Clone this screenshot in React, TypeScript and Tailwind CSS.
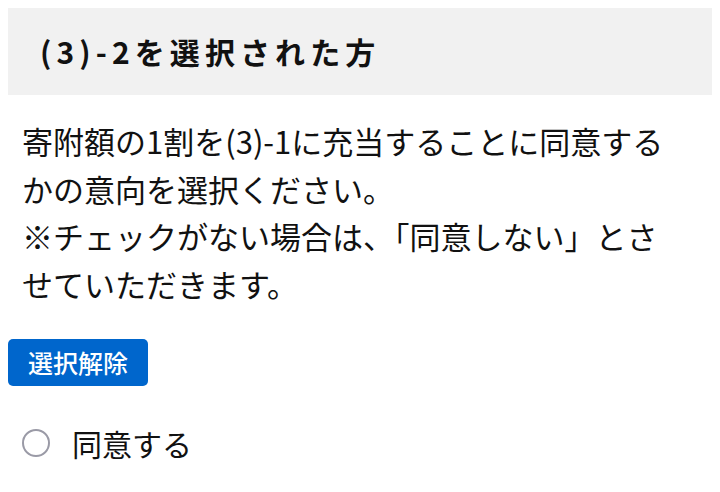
export default function App() {
  return (
    <div className="min-h-[492px] bg-white p-2 text-black" style={{ fontFamily: '"Noto Sans CJK JP", "Noto Sans", sans-serif' }}>
      <div className="flex h-[87px] items-center bg-[#f1f1f1] pl-[32px]">
        <h2 className="text-[30px] font-bold tracking-[0.17em] text-[#111]">(3)-2を選択された方</h2>
      </div>

      <div className="px-[14px] pt-[22px] text-[31px] leading-[47.5px] text-[#111]">
        <p className="whitespace-nowrap">寄附額の1割を(3)-1に充当することに同意する</p>
        <p className="whitespace-nowrap">かの意向を選択ください。</p>
        <p className="whitespace-nowrap">※チェックがない場合は、「同意しない」とさ</p>
        <p className="whitespace-nowrap">せていただきます。</p>
      </div>

      <button
        type="button"
        className="mt-[32px] flex h-[47px] w-[140px] items-center justify-center rounded-[5px] bg-[#0066cc] text-[25px] font-medium text-white"
      >
        選択解除
      </button>

      <label className="mt-[35px] flex items-center pl-[14px] leading-[44px]">
        <span className="h-[28px] w-[28px] rounded-full border-[2.5px] border-[#9a9aa6] bg-white" />
        <span className="ml-[22px] text-[30px] text-[#111]">同意する</span>
      </label>
    </div>
  )
}
